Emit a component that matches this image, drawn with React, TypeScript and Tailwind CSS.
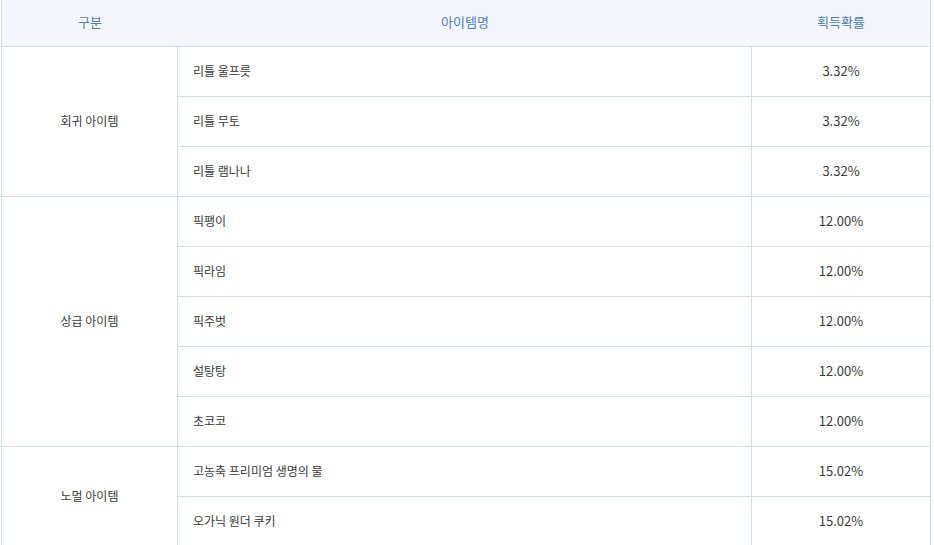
import React from 'react';

const groups = [
  {
    name: '회귀 아이템',
    items: [
      { name: '리틀 울프릇', rate: '3.32%' },
      { name: '리틀 무토', rate: '3.32%' },
      { name: '리틀 램나나', rate: '3.32%' },
    ],
  },
  {
    name: '상급 아이템',
    items: [
      { name: '픽팽이', rate: '12.00%' },
      { name: '픽라임', rate: '12.00%' },
      { name: '픽주벗', rate: '12.00%' },
      { name: '설탕탕', rate: '12.00%' },
      { name: '초코코', rate: '12.00%' },
    ],
  },
  {
    name: '노멀 아이템',
    items: [
      { name: '고농축 프리미엄 생명의 물', rate: '15.02%' },
      { name: '오가닉 원더 쿠키', rate: '15.02%' },
    ],
  },
];

const App = () => {
  return (
    <div className="w-[934px] h-[545px] overflow-hidden bg-white font-['Noto_Sans_CJK_KR',sans-serif] text-[12px] text-[#3a3a3a]">
      <div className="ml-px w-[930px] border-x border-[#d3dcea]">
        {/* Header */}
        <div className="flex h-[47px] pb-[2px] border-b border-[#d3dcea] bg-[#f5f6fb] text-[13px] text-[#4a7ed4]">
          <div className="w-[176px] flex items-center justify-center">구분</div>
          <div className="w-[574px] flex items-center justify-center">아이템명</div>
          <div className="flex-1 flex items-center justify-center">획득확률</div>
        </div>

        {/* Body */}
        {groups.map((group) => (
          <div key={group.name} className="flex border-b border-[#d3dcea]">
            <div className="w-[176px] pb-[2px] border-r border-[#d3dcea] flex items-center justify-center">
              {group.name}
            </div>
            <div className="flex-1 flex flex-col">
              {group.items.map((item, i) =>
                i < group.items.length - 1 ? (
                  <div key={item.name} className="flex h-[50px] pb-[2px] border-b border-[#d3dcea]">
                    <div className="w-[574px] -mb-[2px] border-r border-[#d3dcea] flex items-center pl-[15px] pb-[2px]">
                      {item.name}
                    </div>
                    <div className="flex-1 flex items-center justify-center text-[13px]">{item.rate}</div>
                  </div>
                ) : (
                  <div key={item.name} className="flex h-[49px] pb-[2px]">
                    <div className="w-[574px] -mb-[2px] border-r border-[#d3dcea] flex items-center pl-[15px] pb-[2px]">
                      {item.name}
                    </div>
                    <div className="flex-1 flex items-center justify-center text-[13px]">{item.rate}</div>
                  </div>
                )
              )}
            </div>
          </div>
        ))}
      </div>
    </div>
  );
};

export default App;
